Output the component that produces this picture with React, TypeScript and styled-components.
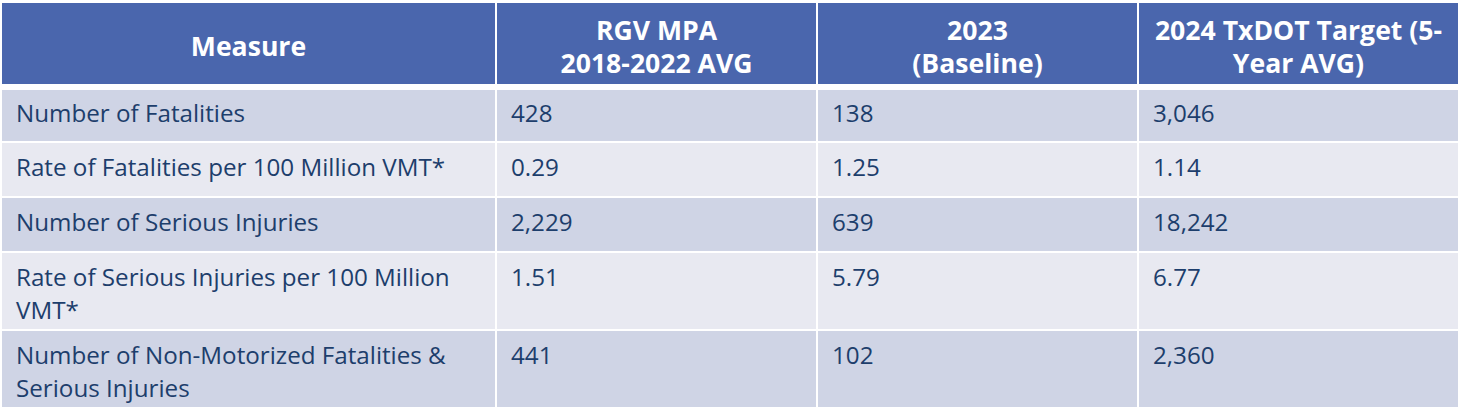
import styled, { createGlobalStyle } from 'styled-components';

const GlobalStyle = createGlobalStyle`
  body {
    margin: 0;
    background: #ffffff;
    font-family: 'Open Sans', 'Liberation Sans', sans-serif;
  }
`;

const Wrapper = styled.div`
  padding: 3px 5px 0 2px;
`;

const Table = styled.div`
  display: grid;
  grid-template-columns: 493px 319px 319px 319px;
  grid-template-rows: 83px 53px 53px 53px 76px 76px;
  column-gap: 2px;
  row-gap: 2px;
  width: 1456px;
`;

const HeadCell = styled.div`
  background: #4a66ad;
  color: #ffffff;
  font-weight: 700;
  font-size: 26.6px;
  line-height: 33px;
  display: flex;
  align-items: center;
  justify-content: center;
  text-align: center;
  margin-bottom: 2px;
  padding: 6px 6px 0;
`;

const Cell = styled.div<{ $shade: boolean }>`
  background: ${(p) => (p.$shade ? '#cfd4e5' : '#e8e9f1')};
  color: #1d3e6c;
  font-size: 24.2px;
  line-height: 33px;
  padding: 7px 12px 0 14px;
`;

const FirstRowCell = styled(Cell)`
  margin-top: 2px;
  padding-top: 6px;
`;

const headers = [
  ['Measure'],
  ['RGV MPA', '2018-2022 AVG'],
  ['2023', '(Baseline)'],
  ['2024 TxDOT Target (5-', 'Year AVG)'],
];

const rows = [
  ['Number of Fatalities', '428', '138', '3,046'],
  ['Rate of Fatalities per 100 Million VMT*', '0.29', '1.25', '1.14'],
  ['Number of Serious Injuries', '2,229', '639', '18,242'],
  ['Rate of Serious Injuries per 100 Million VMT*', '1.51', '5.79', '6.77'],
  ['Number of Non-Motorized Fatalities & Serious Injuries', '441', '102', '2,360'],
];

function App() {
  return (
    <Wrapper>
      <GlobalStyle />
      <Table>
        {headers.map((lines, i) => (
          <HeadCell key={i}>
            <div>
              {lines.map((l, j) => (
                <div key={j}>{l}</div>
              ))}
            </div>
          </HeadCell>
        ))}
        {rows.map((row, r) =>
          row.map((val, c) =>
            r === 0 ? (
              <FirstRowCell key={r + '-' + c} $shade={r % 2 === 0}>
                {val}
              </FirstRowCell>
            ) : (
              <Cell key={r + '-' + c} $shade={r % 2 === 0}>
                {val}
              </Cell>
            )
          )
        )}
      </Table>
    </Wrapper>
  );
}

export default App;
